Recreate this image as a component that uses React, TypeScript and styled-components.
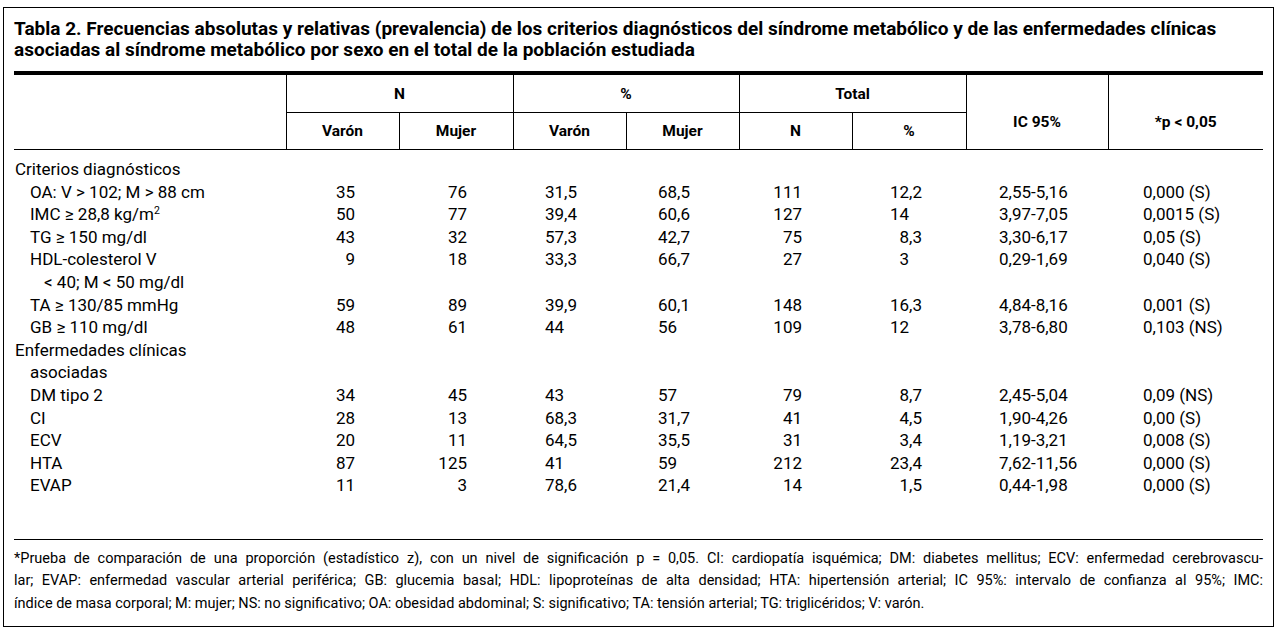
import React from "react";
import styled, { createGlobalStyle } from "styled-components";

const GlobalStyle = createGlobalStyle`
  html, body { margin: 0; padding: 0; background: #fff; }
  body {
    font-family: Roboto, "Liberation Sans", Arial, sans-serif;
    color: #000;
  }
`;

const Frame = styled.div`
  box-sizing: border-box;
  width: 1271px;
  height: 620px;
  margin: 7px 0 0 3px;
  border: 1px solid #000;
  padding: 0 10px;
`;

const Caption = styled.div`
  padding-top: 10px;
  font-weight: 700;
  font-size: 19px;
  line-height: 21px;
  white-space: nowrap;
`;

const CaptionLine = styled.div``;

const ThickRule = styled.div`
  margin-top: 11px;
  height: 4px;
  background: #000;
`;

const Table = styled.table`
  width: 100%;
  table-layout: fixed;
  border-collapse: collapse;
  font-size: 17px;

  tbody tr:first-child td {
    padding-top: 8px;
  }
`;

const Th = styled.th<{ $noLeft?: boolean; $h: number; $pt?: number }>`
  height: ${(p) => p.$h}px;
  padding: ${(p) => p.$pt ?? 0}px 0 0 0;
  border-left: ${(p) => (p.$noLeft ? "none" : "1px solid #000")};
  border-bottom: 1px solid #000;
  font-weight: 700;
  font-size: 15.5px;
  text-align: center;
  vertical-align: middle;
`;

type Align = "left" | "right";

const Td = styled.td<{ $align: Align; $pad: number }>`
  padding: 0;
  ${(p) => (p.$align === "left" ? `padding-left: ${p.$pad}px;` : `padding-right: ${p.$pad}px;`)}
  text-align: ${(p) => p.$align};
  line-height: 22.6px;
  white-space: nowrap;
  vertical-align: top;
`;

const LabelCell = styled.td<{ $level: number }>`
  padding: 0 0 0 ${(p) => [1, 16, 30][p.$level]}px;
  line-height: 22.6px;
  white-space: nowrap;
  vertical-align: top;
`;

const Sup = styled.sup`
  font-size: 0.62em;
  line-height: 0;
  vertical-align: 0.6em;
`;

const Hidden = styled.span`
  visibility: hidden;
`;

const Footer = styled.div`
  margin-top: 42px;
  border-top: 1px solid #000;
  padding-top: 8px;
  font-size: 14.5px;
  line-height: 22.5px;
`;

const FooterLine = styled.div<{ $last?: boolean }>`
  text-align: justify;
  text-align-last: ${(p) => (p.$last ? "left" : "justify")};
  white-space: nowrap;
`;

type Row = {
  label: React.ReactNode;
  level: number;
  v?: string[];
};

const rows: Row[] = [
  { label: "Criterios diagnósticos", level: 0 },
  { label: "OA: V > 102; M > 88 cm", level: 1, v: ["35", "76", "31,5", "68,5", "111", "12,2", "2,55-5,16", "0,000 (S)"] },
  {
    label: (
      <>
        IMC ≥ 28,8 kg/m<Sup>2</Sup>
      </>
    ),
    level: 1,
    v: ["50", "77", "39,4", "60,6", "127", "14", "3,97-7,05", "0,0015 (S)"],
  },
  { label: "TG ≥ 150 mg/dl", level: 1, v: ["43", "32", "57,3", "42,7", "75", "8,3", "3,30-6,17", "0,05 (S)"] },
  { label: "HDL-colesterol V", level: 1, v: ["9", "18", "33,3", "66,7", "27", "3", "0,29-1,69", "0,040 (S)"] },
  { label: "< 40; M < 50 mg/dl", level: 2 },
  { label: "TA ≥ 130/85 mmHg", level: 1, v: ["59", "89", "39,9", "60,1", "148", "16,3", "4,84-8,16", "0,001 (S)"] },
  { label: "GB ≥ 110 mg/dl", level: 1, v: ["48", "61", "44", "56", "109", "12", "3,78-6,80", "0,103 (NS)"] },
  { label: "Enfermedades clínicas", level: 0 },
  { label: "asociadas", level: 1 },
  { label: "DM tipo 2", level: 1, v: ["34", "45", "43", "57", "79", "8,7", "2,45-5,04", "0,09 (NS)"] },
  { label: "CI", level: 1, v: ["28", "13", "68,3", "31,7", "41", "4,5", "1,90-4,26", "0,00 (S)"] },
  { label: "ECV", level: 1, v: ["20", "11", "64,5", "35,5", "31", "3,4", "1,19-3,21", "0,008 (S)"] },
  { label: "HTA", level: 1, v: ["87", "125", "41", "59", "212", "23,4", "7,62-11,56", "0,000 (S)"] },
  { label: "EVAP", level: 1, v: ["11", "3", "78,6", "21,4", "14", "1,5", "0,44-1,98", "0,000 (S)"] },
];

const cols: { align: Align; pad: number }[] = [
  { align: "right", pad: 44 },
  { align: "right", pad: 46 },
  { align: "left", pad: 32 },
  { align: "left", pad: 32 },
  { align: "right", pad: 50 },
  { align: "right", pad: 44 },
  { align: "left", pad: 33 },
  { align: "left", pad: 35 },
];

const widths = [272, 113, 114, 113, 113, 113, 114, 142];

function renderValue(value: string, index: number) {
  if (index === 5 && !value.includes(",")) {
    return (
      <>
        {value}
        <Hidden>,0</Hidden>
      </>
    );
  }
  return value;
}

export default function App() {
  return (
    <>
      <GlobalStyle />
      <Frame>
        <Caption>
          <CaptionLine>
            Tabla 2. Frecuencias absolutas y relativas (prevalencia) de los criterios diagnósticos del síndrome
            metabólico y de las enfermedades clínicas
          </CaptionLine>
          <CaptionLine>asociadas al síndrome metabólico por sexo en el total de la población estudiada</CaptionLine>
        </Caption>
        <ThickRule />
        <Table>
          <colgroup>
            {widths.map((w, i) => (
              <col key={i} style={{ width: w }} />
            ))}
            <col />
          </colgroup>
          <thead>
            <tr>
              <Th $noLeft $h={37} rowSpan={2} />
              <Th $h={37} colSpan={2}>N</Th>
              <Th $h={37} colSpan={2}>%</Th>
              <Th $h={37} colSpan={2}>Total</Th>
              <Th $h={37} $pt={20} rowSpan={2}>IC 95%</Th>
              <Th $h={37} $pt={20} rowSpan={2}>*p &lt; 0,05</Th>
            </tr>
            <tr>
              <Th $h={36}>Varón</Th>
              <Th $h={36}>Mujer</Th>
              <Th $h={36}>Varón</Th>
              <Th $h={36}>Mujer</Th>
              <Th $h={36}>N</Th>
              <Th $h={36}>%</Th>
            </tr>
          </thead>
          <tbody>
            {rows.map((r, ri) => (
              <tr key={ri}>
                <LabelCell $level={r.level}>{r.label}</LabelCell>
                {cols.map((c, ci) => (
                  <Td key={ci} $align={c.align} $pad={c.pad}>
                    {r.v ? renderValue(r.v[ci], ci) : null}
                  </Td>
                ))}
              </tr>
            ))}
          </tbody>
        </Table>
        <Footer>
          <FooterLine>
            *Prueba de comparación de una proporción (estadístico z), con un nivel de significación p = 0,05. CI:
            cardiopatía isquémica; DM: diabetes mellitus; ECV: enfermedad cerebrovascu-
          </FooterLine>
          <FooterLine>
            lar; EVAP: enfermedad vascular arterial periférica; GB: glucemia basal; HDL: lipoproteínas de alta
            densidad; HTA: hipertensión arterial; IC 95%: intervalo de confianza al 95%; IMC:
          </FooterLine>
          <FooterLine $last>
            índice de masa corporal; M: mujer; NS: no significativo; OA: obesidad abdominal; S: significativo; TA:
            tensión arterial; TG: triglicéridos; V: varón.
          </FooterLine>
        </Footer>
      </Frame>
    </>
  );
}
